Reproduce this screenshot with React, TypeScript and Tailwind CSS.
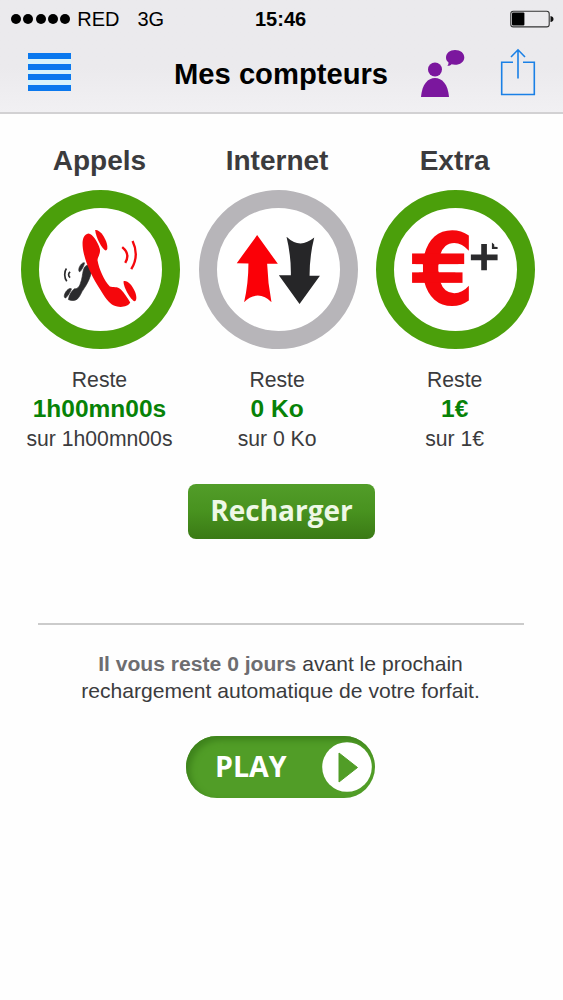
import React from "react";

interface Counter {
  title: string;
  left: string;
  total: string;
  ring: string;
  icon: React.ReactNode;
}

const PhoneIcon = () => (
  <svg viewBox="33 150 476 476" className="h-full w-full">
    <g fill="#2b2b2d" stroke="#2b2b2d" strokeWidth="2">
      <path d="M229 376 C240 372 247 380 244 393 C241 412 232 430 221 446 C213 456 211 468 202 476 C195 482 182 482 175 478 C177 464 185 452 193 446 C202 446 207 441 211 429 C216 416 217 402 219 393 C221 384 224 379 229 376Z" />
      <path d="M223 368 C218 366 210 374 207 383 C205 389 206 395 209 395 C214 391 222 377 223 368Z" />
      <path d="M184 446 C178 442 168 451 164 461 C161 468 163 474 167 473 C173 468 182 454 184 446Z" />
    </g>
    <path d="M169 385 C162 394 162 413 170 423 M180 395 C174 400 174 407 180 412" fill="none" stroke="#2b2b2d" strokeWidth="5" />
    <g fill="#f5070c">
      <path d="M235 280 C247 281 264 306 269 326 C272 342 262 350 262 360 C267 388 282 420 299 439 C308 443 322 437 332 448 C343 459 353 475 360 487 C353 500 329 504 311 496 C296 489 282 468 270 448 C250 416 230 380 221 340 C215 314 214 284 235 280Z" />
      <path d="M255 270 C265 267 280 283 288 304 C293 319 293 331 286 331 C276 328 257 292 255 270Z" />
      <path d="M340 423 C350 419 366 434 374 454 C380 469 380 482 373 483 C363 480 339 442 340 423Z" />
    </g>
    <path d="M336 321 C352 334 356 350 345 368 M367 303 C381 332 381 358 363 387" fill="none" stroke="#f5070c" strokeWidth="7" />
  </svg>
);

const ArrowsIcon = () => (
  <svg viewBox="26 150 476 476" className="h-full w-full">
    <path d="M200 285 L262 371 L230 371 Q232 430 243 486 Q224 466 202 466 Q179 467 161 486 Q174 430 174 370 L139 369Z" fill="#fb0007" />
    <path d="M288 290 Q309 310 330 310 Q350 309 371 292 Q357 347 357 407 L388 407 L327 491 L265 405 L301 405 Q302 348 288 290Z" fill="#262628" />
  </svg>
);

const EuroIcon = () => (
  <svg viewBox="19 150 476 476" className="h-full w-full">
    <g fill="#f5070c">
      <text
        transform="translate(142 493) scale(0.92 1)"
        fontSize="298"
        fontWeight="700"
        fontFamily="'DejaVu Sans Condensed', 'DejaVu Sans', sans-serif"
      >
        €
      </text>
      <rect x="127" y="340" width="156" height="32" />
      <rect x="127" y="396" width="151" height="32" />
    </g>
    <path d="M127 372 H159 V396 H127Z M207 372 H290 V396 H207Z" fill="#fff" />
    <path d="M334 312 H351 V343 H383 V360 H351 V390 H334 V360 H303 V343 H334Z M366 307 L373 313 V320 L383 321 V327 H366Z" fill="#2b2b2d" />
  </svg>
);

const counters: Counter[] = [
  {
    title: "Appels",
    left: "1h00mn00s",
    total: "sur 1h00mn00s",
    ring: "border-[#4b9f0b]",
    icon: <PhoneIcon />,
  },
  {
    title: "Internet",
    left: "0 Ko",
    total: "sur 0 Ko",
    ring: "border-[#b7b5b9]",
    icon: <ArrowsIcon />,
  },
  {
    title: "Extra",
    left: "1€",
    total: "sur 1€",
    ring: "border-[#4b9f0b]",
    icon: <EuroIcon />,
  },
];

const StatusBar = () => (
  <div className="grid h-[37px] grid-cols-[244px_auto_1fr] items-center pl-[11px] pr-[9px] text-[20px] leading-none">
    <div className="flex items-center">
      <div className="flex gap-[2.3px]">
        {[0, 1, 2, 3, 4].map((dot) => (
          <span key={dot} className="h-[10px] w-[10px] rounded-full bg-black" />
        ))}
      </div>
      <span className="ml-[7px]">RED</span>
      <span className="ml-[18px]">3G</span>
    </div>
    <span className="font-bold">15:46</span>
    <svg viewBox="0 0 44 18" className="h-[18px] w-[44px] justify-self-end">
      <rect x="0.8" y="1.3" width="38.4" height="15.6" rx="2.5" fill="none" stroke="#333" strokeWidth="1.1" />
      <rect x="2" y="2.6" width="12.4" height="13" rx="1" fill="#000" />
      <path d="M40.5 6 Q43.5 6.5 43.5 9 Q43.5 11.5 40.5 12Z" fill="#111" />
    </svg>
  </div>
);

const NavBar = () => (
  <div className="flex h-[75px] items-start pl-[28px] pr-[27px]">
    <button className="mt-[16px] flex h-[38px] w-[43px] flex-col justify-between bg-[#d8f3fb]">
      {[0, 1, 2, 3].map((bar) => (
        <span key={bar} className="h-[6px] w-full bg-[#0a78ee]" />
      ))}
    </button>
    <h1 className="ml-[103px] mt-[20px] whitespace-nowrap text-[29.2px] font-bold leading-[34px] text-black">
      Mes compteurs
    </h1>
    <svg viewBox="0 0 44 48" className="ml-auto mt-[13px] h-[48px] w-[44px]" fill="#7b179e">
      <circle cx="14" cy="19.5" r="7" />
      <path d="M0 47 C1 34 7 28 14 28 C21 28 27 34 28 47Z" />
      <path d="M34 0 C39.5 0 43.3 3 43.3 7.5 C43.3 12 39 14.8 34 14.8 C32.8 14.8 31.5 14.6 30.5 14.3 C29.5 15.5 28 16 26.3 15.8 C27.3 14.8 27.6 13.6 27.5 12.5 C25.7 11 25 9.5 25 7.5 C25 3 29 0 34 0Z" />
    </svg>
    <svg
      viewBox="0 0 36 48"
      className="ml-[35px] mt-[11px] h-[48px] w-[36px]"
      fill="none"
      stroke="#1a80e6"
      strokeWidth="1.6"
    >
      <path d="M13 14.3 H1.7 V46.5 H34.3 V14.3 H23" />
      <path d="M18 30.5 V2 M11 9 L18 1.8 L25 9" />
    </svg>
  </div>
);

const App: React.FC = () => {
  return (
    <div className="min-h-[1000px] w-[563px] bg-[#fefefe] font-['Liberation_Sans',Arial,sans-serif] text-[#3b3b3d]">
      <header className="h-[114px] border-b-2 border-[#d2d1d3] bg-linear-to-b from-[#ebeaed] from-60% to-[#f1f0f3] text-black">
        <StatusBar />
        <NavBar />
      </header>

      <main className="flex flex-col items-center">
        {/* Counters */}
        <div className="ml-[10.7px] mt-[31px] grid w-[532.8px] grid-cols-3 self-start text-center text-[21.2px] leading-[29px]">
          {counters.map(({ title, left, total, ring, icon }) => (
            <div key={title} className="flex flex-col items-center whitespace-nowrap">
              <h2 className="text-[28px] font-bold leading-[32px]">{title}</h2>
              <div className={`ml-[2px] mt-[13px] h-[159px] w-[159px] rounded-full border-[18px] bg-white ${ring}`}>
                <div className="-m-[18px] h-[159px] w-[159px]">{icon}</div>
              </div>
              <p className="mb-[1px] mt-[16px]">Reste</p>
              <p className="text-[24.5px] font-bold leading-[28px] text-[#078207]">{left}</p>
              <p className="leading-[31px]">{total}</p>
            </div>
          ))}
        </div>

        <button className="mt-[30px] h-[55px] w-[187px] rounded-[8px] bg-linear-to-b from-[#529d29] via-[#48921f] to-[#3a7a15] pb-[3px] font-['Open_Sans',sans-serif] text-[28px] font-bold leading-none text-[#eef8e6]">
          Recharger
        </button>

        <hr className="mr-[2px] mt-[84px] w-[486px] border-t-2 border-[#cbcbcb]" />

        <p className="mr-[2px] mt-[26px] text-center text-[21.1px] leading-[26.5px]">
          <strong className="text-[#6d6d70]">Il vous reste 0 jours</strong> avant le prochain
          <br />
          rechargement automatique de votre forfait.
        </p>

        <button className="mr-[2px] mt-[32px] flex h-[62px] w-[189px] items-center justify-between rounded-full bg-[#519d27] pl-[29px] pr-[3px] shadow-[inset_4px_4px_6px_#3d821b]">
          <span className="pb-[1px] font-['Open_Sans',sans-serif] text-[28.6px] font-bold leading-none text-white">
            PLAY
          </span>
          <svg viewBox="0 0 50 50" className="mb-[1px] h-[50px] w-[50px]">
            <circle cx="25" cy="25" r="24.8" fill="#fff" />
            <path d="M17 11 L35.5 25.5 L17 40Z" fill="#519d27" stroke="#519d27" strokeLinejoin="round" />
          </svg>
        </button>
      </main>
    </div>
  );
};

export default App;
